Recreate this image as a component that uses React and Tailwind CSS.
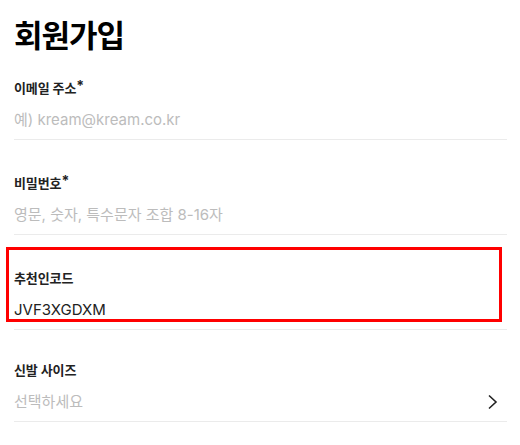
import React from 'react';

const font = { fontFamily: 'Inter, "Noto Sans CJK KR", sans-serif' };

const Field = ({ label, required, placeholder, value, arrow, top = 'pt-[34px]' }) => (
  <div className={top}>
    <div className="text-[13px] leading-[18px] font-bold text-[#222] tracking-[-0.1px]">
      {label}
      {required && <span className="relative -top-[2px] text-[14px]">*</span>}
    </div>
    <div className="mt-[4px] flex items-center justify-between border-b border-[#ebebeb] py-[8px]">
      <span
        className={
          'text-[15px] leading-[22px] ' +
          (value ? 'text-[#222]' : 'text-[#bcbcbc]')
        }
      >
        {value || placeholder}
      </span>
      {arrow && (
        <svg width="16" height="16" viewBox="0 0 16 16" className="mr-[6px]">
          <polyline
            points="4,1.5 11,8 4,14.5"
            fill="none"
            stroke="#222"
            strokeWidth="1.6"
          />
        </svg>
      )}
    </div>
  </div>
);

export default function App() {
  return (
    <div className="w-[520px] h-[445px] overflow-hidden bg-white pl-[14px] pr-[13px] pt-[18px]" style={font}>
      <h2 className="text-[31px] leading-[36px] font-bold text-black tracking-[-1px]">회원가입</h2>

      <Field top="pt-[25px]" label="이메일 주소" required placeholder="예) kream@kream.co.kr" />
      <Field label="비밀번호" required placeholder="영문, 숫자, 특수문자 조합 8-16자" />

      <div className="relative">
        <Field label="추천인코드" value="JVF3XGDXM" />
        {/* highlight box over the referral field */}
        <div className="absolute left-[-8px] top-[12px] w-[496px] h-[75px] border-[3px] border-[#ff0000] pointer-events-none" />
      </div>

      <Field top="pt-[31px]" label="신발 사이즈" placeholder="선택하세요" arrow />
    </div>
  );
}
